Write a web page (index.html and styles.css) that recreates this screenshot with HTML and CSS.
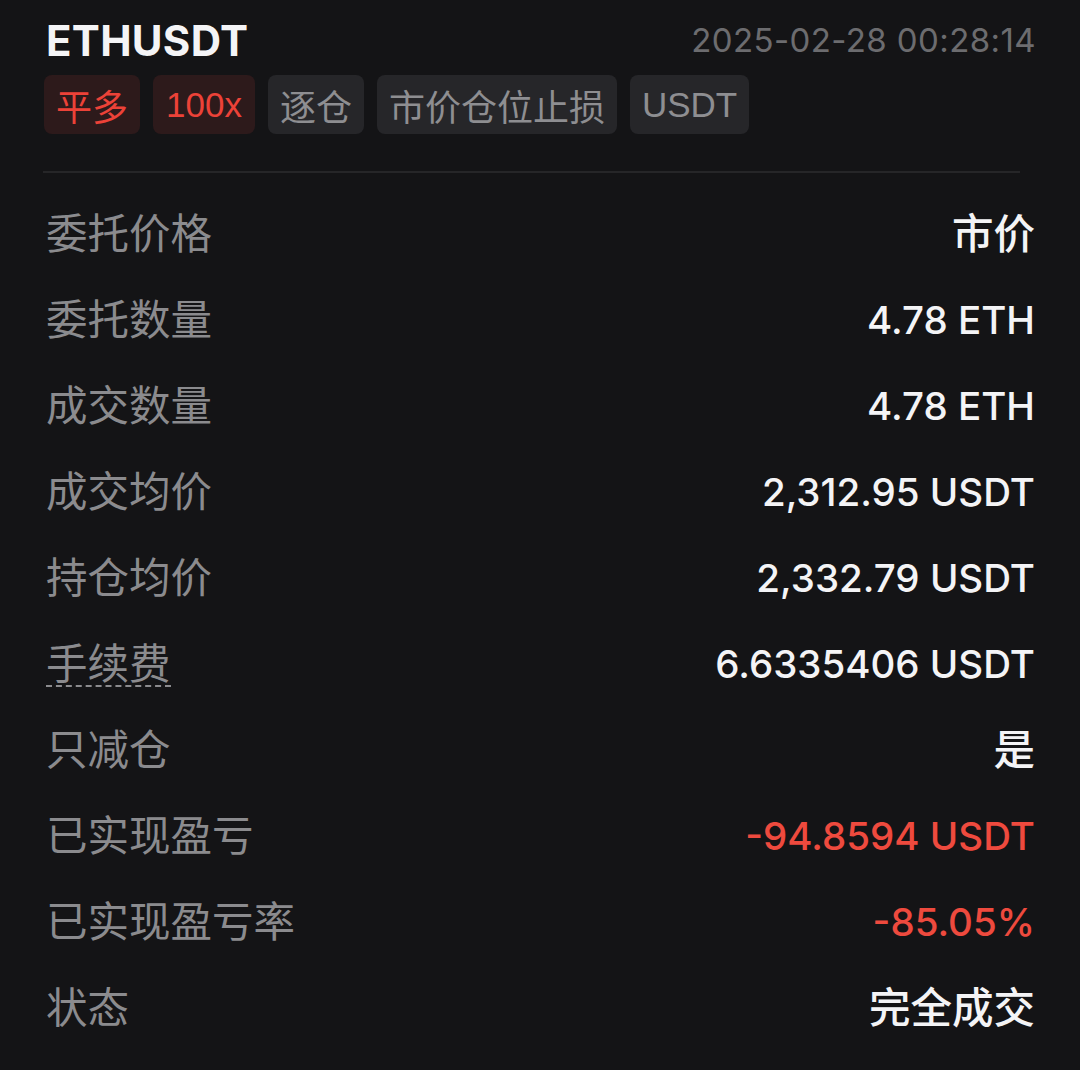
FILE: index.html
```html
<!DOCTYPE html>
<html lang="zh-CN">
<head>
<meta charset="utf-8">
<link rel="stylesheet" href="styles.css">
</head>
<body>
<div class="page">
  <div class="header">
    <div class="symbol">ETHUSDT</div>
    <div class="time">2025-02-28 00:28:14</div>
  </div>
  <div class="tags">
    <span class="tag red">平多</span>
    <span class="tag red latin wide">100x</span>
    <span class="tag">逐仓</span>
    <span class="tag">市价仓位止损</span>
    <span class="tag latin">USDT</span>
  </div>
  <div class="divider"></div>
  <div class="rows">
    <div class="row"><span class="label">委托价格</span><span class="value cjk">市价</span></div>
    <div class="row"><span class="label">委托数量</span><span class="value">4.78 ETH</span></div>
    <div class="row"><span class="label">成交数量</span><span class="value">4.78 ETH</span></div>
    <div class="row"><span class="label">成交均价</span><span class="value">2,312.95 USDT</span></div>
    <div class="row"><span class="label">持仓均价</span><span class="value">2,332.79 USDT</span></div>
    <div class="row"><span class="label"><span class="dashed">手续费</span></span><span class="value">6.6335406 USDT</span></div>
    <div class="row"><span class="label">只减仓</span><span class="value cjk">是</span></div>
    <div class="row"><span class="label">已实现盈亏</span><span class="value loss">-94.8594 USDT</span></div>
    <div class="row"><span class="label">已实现盈亏率</span><span class="value loss">-85.05%</span></div>
    <div class="row"><span class="label">状态</span><span class="value cjk">完全成交</span></div>
  </div>
</div>
</body>
</html>
```
FILE: styles.css
```css
html, body {
  margin: 0;
  padding: 0;
  background: #141416;
}
body {
  font-family: Inter, "Noto Sans CJK SC", sans-serif;
  color: #f2f2f3;
}
.page {
  padding: 14px 46px 0 46px;
}
.header {
  display: flex;
  justify-content: space-between;
  align-items: center;
  height: 52px;
}
.symbol {
  font-size: 42px;
  font-weight: 700;
  color: #f4f4f6;
  letter-spacing: 0.3px;
}
.time {
  font-size: 33px;
  color: #6c6c6f;
  letter-spacing: 0.4px;
  margin-right: -2px;
}
.tags {
  display: flex;
  gap: 13px;
  margin-top: 9px;
  margin-left: -2px;
}
.tag {
  display: flex;
  align-items: center;
  height: 59px;
  padding: 0 12px;
  border-radius: 8px;
  background: #262629;
  color: #8e8e91;
  font-size: 36px;
  font-family: "Noto Sans CJK SC", sans-serif;
}
.tag.latin {
  font-family: "Liberation Sans", "Noto Sans CJK SC", sans-serif;
  font-size: 35px;
  letter-spacing: 0;
  padding: 0 12px;
}
.tag.wide {
  padding: 0 13px;
}
.tag.red {
  background: #2d1a1b;
  color: #ec4238;
}
.divider {
  height: 2px;
  background: #262628;
  margin: 37px 14px 0 -3px;
}
.rows {
  padding-top: 15px;
  display: flex;
  flex-direction: column;
}
.row {
  display: flex;
  justify-content: space-between;
  align-items: center;
  height: 86px;
}
.label {
  font-family: "Noto Sans CJK SC", sans-serif;
  font-size: 41.5px;
  color: #8b8b8e;
  font-weight: 400;
}
.dashed {
  display: inline-block;
  line-height: 1.1;
  border-bottom: 2px dashed #8b8b8e;
}
.value {
  font-size: 38.5px;
  font-weight: 500;
  color: #f4f4f6;
  letter-spacing: 0;
  padding-top: 6px;
  margin-right: -1px;
}
.value.cjk {
  font-family: "Noto Sans CJK SC", sans-serif;
  font-size: 41.5px;
  padding-top: 0;
}
.value.loss {
  color: #ee4a3e;
}
```
